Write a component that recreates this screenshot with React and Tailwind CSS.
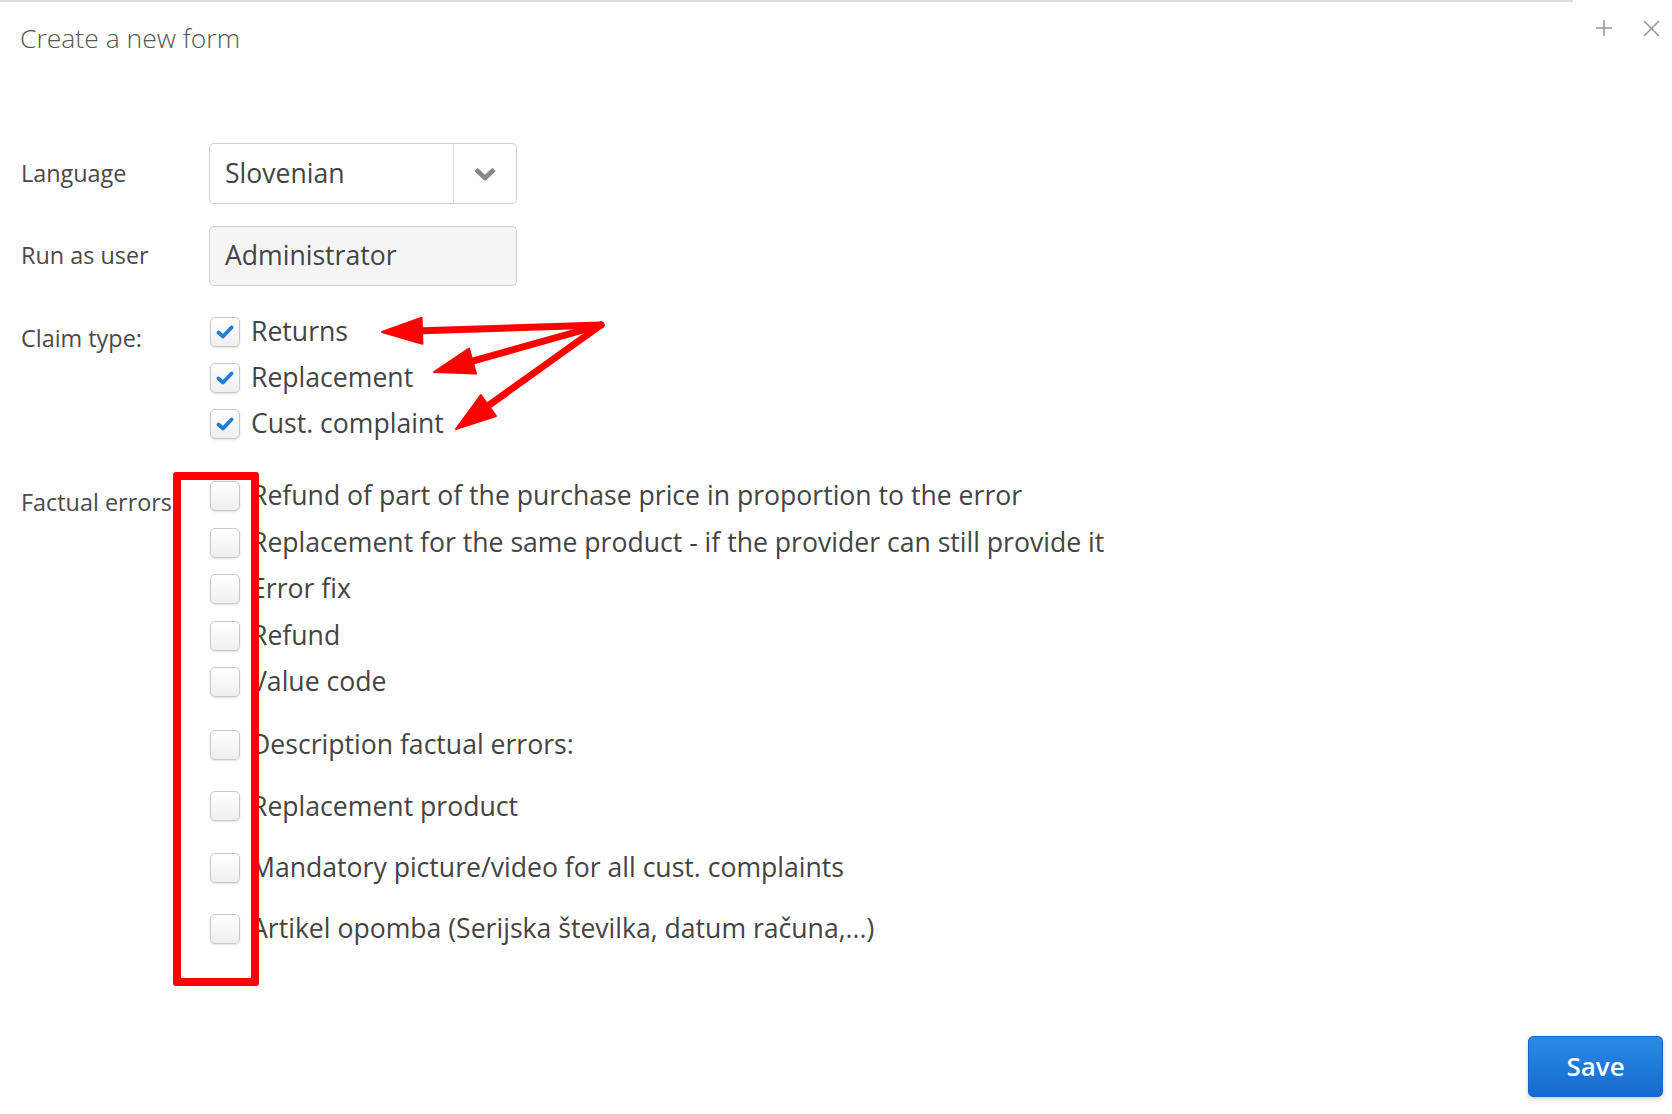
import React from "react";

const claimTypes = ["Returns", "Replacement", "Cust. complaint"];

const factualErrors = [
    "Refund of part of the purchase price in proportion to the error",
    "Replacement for the same product - if the provider can still provide it",
    "Error fix",
    "Refund",
    "Value code",
];

const extraFields = [
    "Description factual errors:",
    "Replacement product",
    "Mandatory picture/video for all cust. complaints",
    "Artikel opomba (Serijska številka, datum računa,...)",
];

function Checkbox({ checked }) {
    return (
        <div className="w-[30px] h-[30px] ml-[1px] shrink-0 rounded-[5px] border border-[#c9c9c9] bg-gradient-to-b from-white to-[#efefef] shadow-[0_1px_2px_rgba(0,0,0,0.12)] flex items-center justify-center">
            {checked && (
                <svg width="18" height="14" viewBox="0 0 18 14">
                    <path
                        d="M2.5 7.5 L7 11.5 L15.5 2.5"
                        fill="none"
                        stroke="#1f7ed8"
                        strokeWidth="3.8"
                        strokeLinecap="round"
                        strokeLinejoin="round"
                    />
                </svg>
            )}
        </div>
    );
}

function Option({ label, checked, height = "h-[46px]" }) {
    return (
        <div className={`flex items-center gap-[11px] ${height}`}>
            <Checkbox checked={checked} />
            <span className="text-[26.6px] text-[#444] whitespace-nowrap">{label}</span>
        </div>
    );
}

function Arrow({ from, tip, base1, base2 }) {
    const bx = (base1[0] + base2[0]) / 2;
    const by = (base1[1] + base2[1]) / 2;
    return (
        <g>
            <line
                x1={from[0]}
                y1={from[1]}
                x2={bx}
                y2={by}
                stroke="#ff0000"
                strokeWidth="7"
                strokeLinecap="round"
            />
            <polygon
                points={`${tip[0]},${tip[1]} ${base1[0]},${base1[1]} ${base2[0]},${base2[1]}`}
                fill="#ff0000"
                stroke="#ff0000"
                strokeWidth="2"
                strokeLinejoin="round"
            />
        </g>
    );
}

export default function App() {
    return (
        <div className="relative w-[1672px] h-[1114px] bg-white flex flex-col font-['Open_Sans',sans-serif] overflow-hidden">
            {/* top edge */}
            <div className="h-[2px] w-[1573px] bg-[#dedede]" />

            {/* header */}
            <div className="flex justify-between items-start">
                <h1 className="pl-[20px] pt-[18px] text-[26.5px] leading-[37px] font-light text-[#555]">
                    Create a new form
                </h1>
                <div className="flex items-center gap-[30px] pt-[17px] pr-[12px]">
                    <svg width="18" height="18" viewBox="0 0 18 18">
                        <path d="M9 1 V17 M1 9 H17" stroke="#999" strokeWidth="1.6" />
                    </svg>
                    <svg width="17" height="17" viewBox="0 0 17 17">
                        <path d="M1 1 L16 16 M16 1 L1 16" stroke="#999" strokeWidth="1.6" />
                    </svg>
                </div>
            </div>

            {/* form */}
            <div className="pl-[21px] mt-[86px] text-[#4a4a4a]">
                <div className="flex items-center h-[61px]">
                    <label className="w-[188px] text-[23.4px]">Language</label>
                    <div className="w-[308px] h-[61px] rounded-[5px] border border-[#cfcfcf] bg-white flex items-stretch">
                        <span className="flex-1 flex items-center pl-[15px] text-[26.6px] text-[#444]">
                            Slovenian
                        </span>
                        <div className="w-[63px] border-l border-[#dedede] flex items-center justify-center">
                            <svg width="24" height="16" viewBox="0 0 24 16">
                                <path
                                    d="M3 3.5 L12 12 L21 3.5"
                                    fill="none"
                                    stroke="#888"
                                    strokeWidth="4.6"
                                    strokeLinejoin="round"
                                />
                            </svg>
                        </div>
                    </div>
                </div>

                <div className="flex items-center h-[60px] mt-[22px]">
                    <label className="w-[188px] text-[23.4px]">Run as user</label>
                    <div className="w-[308px] h-[60px] rounded-[5px] border border-[#cfcfcf] bg-[#f5f5f5] flex items-center pl-[15px] text-[26.6px] text-[#444]">
                        Administrator
                    </div>
                </div>

                <div className="flex mt-[23px]">
                    <label className="w-[188px] text-[23.4px] leading-[30px] pt-[14px]">Claim type:</label>
                    <div className="flex flex-col">
                        {claimTypes.map((c) => (
                            <Option key={c} label={c} checked />
                        ))}
                    </div>
                </div>

                <div className="flex mt-[26px]">
                    <label className="w-[188px] text-[23.4px] leading-[30px] pt-[14px]">Factual errors:</label>
                    <div className="flex flex-col">
                        {factualErrors.map((c) => (
                            <Option key={c} label={c} height="h-[46.5px]" />
                        ))}
                        <div className="flex flex-col mt-[9px]">
                            {extraFields.map((c) => (
                                <Option key={c} label={c} height="h-[61.3px]" />
                            ))}
                        </div>
                    </div>
                </div>
            </div>

            {/* footer */}
            <div className="mt-auto flex justify-end pr-[9px] pb-[17px]">
                <button className="w-[135px] h-[61px] rounded-[5px] border border-[#1664c4] bg-gradient-to-b from-[#2b8be6] to-[#1669cf] text-white text-[26px] font-semibold shadow-[0_2px_4px_rgba(0,0,0,0.2)]">
                    Save
                </button>
            </div>

            {/* annotations */}
            <div className="absolute left-[173px] top-[472px] w-[86px] h-[514px] border-[8px] border-[#ff0000] rounded-[3px]" />
            <svg className="absolute left-0 top-0 pointer-events-none" width="1672" height="1114">
                <Arrow from={[601, 325]} tip={[382, 332]} base1={[421.6, 317.7]} base2={[422.4, 343.7]} />
                <Arrow from={[601, 325]} tip={[434, 372]} base1={[476, 373.6]} base2={[469, 348.6]} />
                <Arrow from={[601, 325]} tip={[456, 429]} base1={[496, 416.1]} base2={[480.8, 395.1]} />
            </svg>
        </div>
    );
}
